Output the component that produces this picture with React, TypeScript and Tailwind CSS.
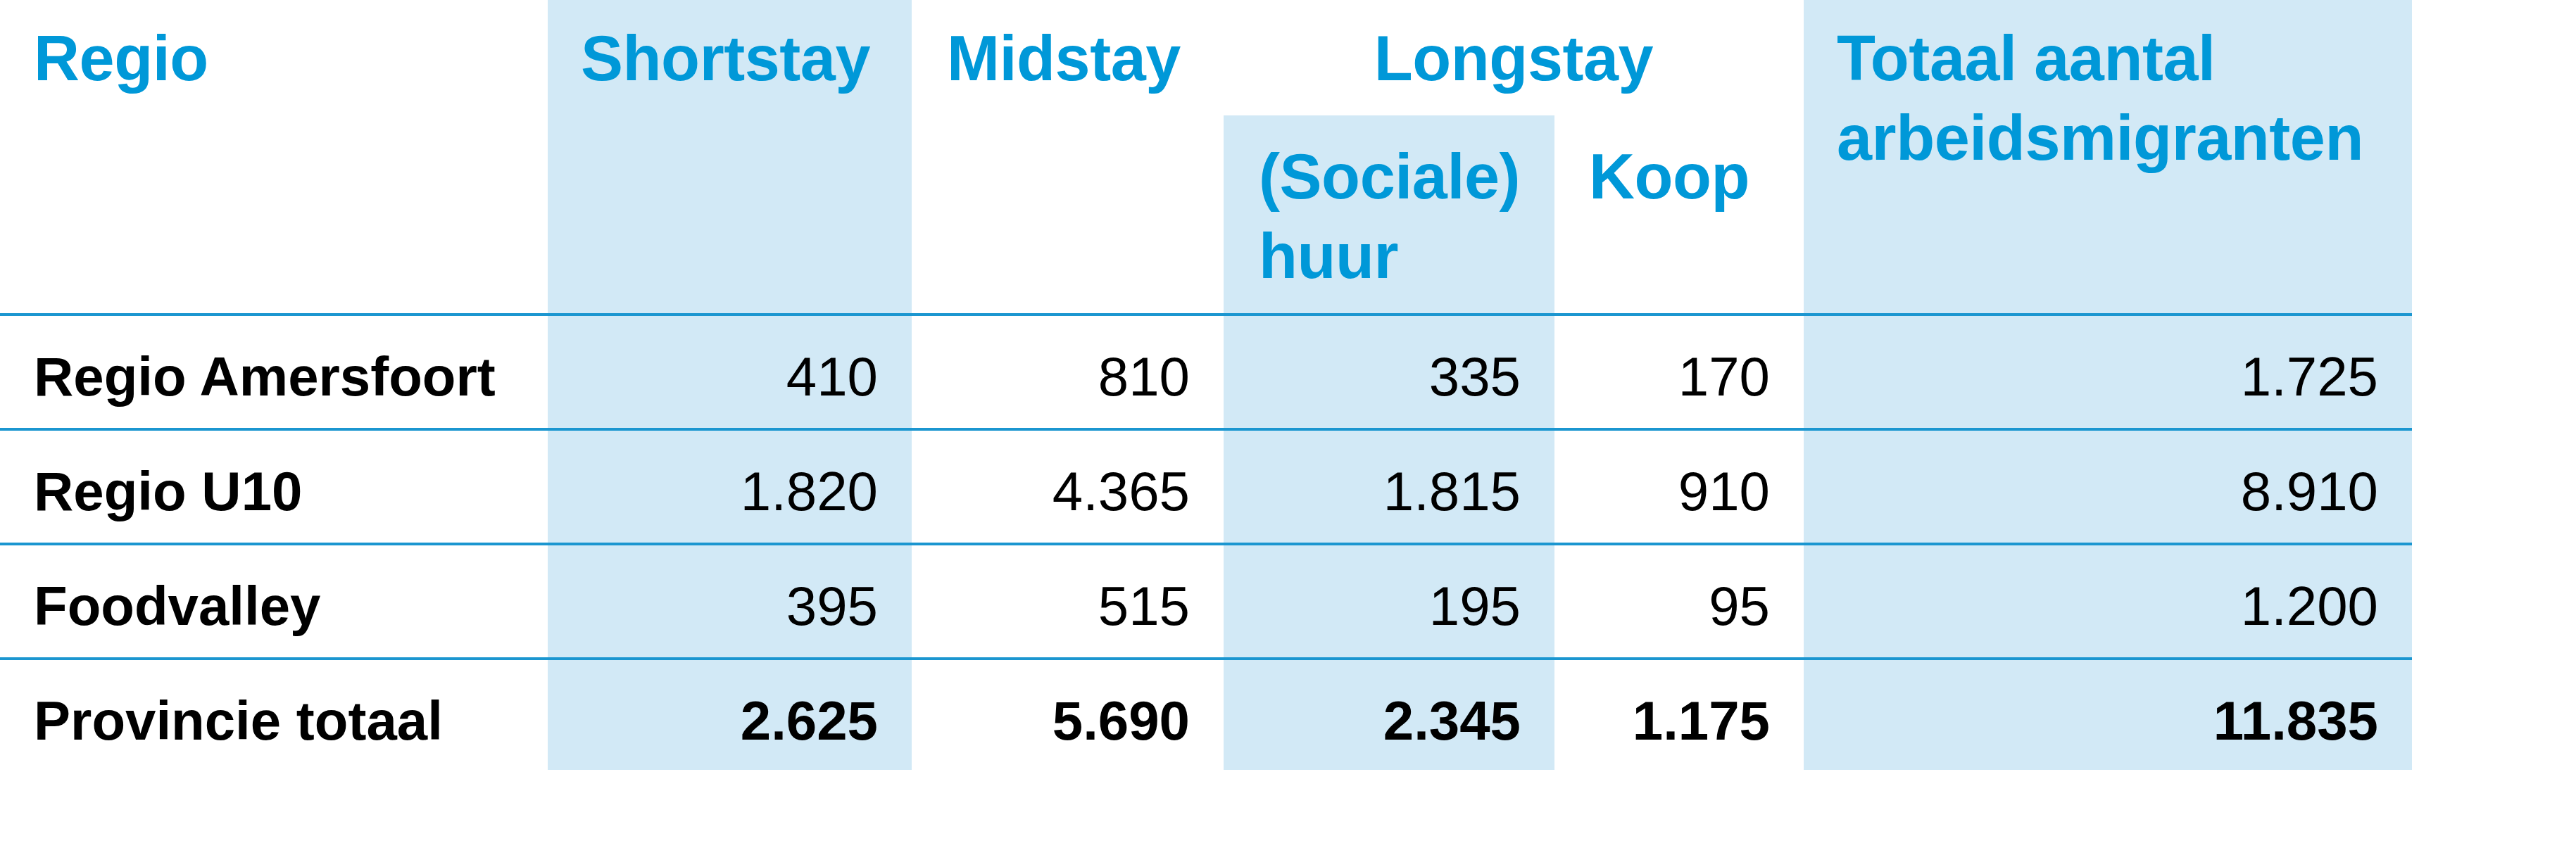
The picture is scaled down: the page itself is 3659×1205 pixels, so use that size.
import { Fragment } from "react";

const rows = [
  { name: "Regio Amersfoort", values: ["410", "810", "335", "170", "1.725"] },
  { name: "Regio U10", values: ["1.820", "4.365", "1.815", "910", "8.910"] },
  { name: "Foodvalley", values: ["395", "515", "195", "95", "1.200"] },
  { name: "Provincie totaal", values: ["2.625", "5.690", "2.345", "1.175", "11.835"], total: true },
];

// shaded columns: Shortstay, (Sociale) huur, Totaal
const shaded = [true, false, true, false, true];

const head = "text-[90px] leading-[113px] font-bold text-[#0098d8] pt-[27px] tracking-[-0.005em]";

export default function App() {
  return (
    <div
      className="w-[3659px] h-[1205px] bg-white"
      style={{ fontFamily: '"Liberation Sans", Arial, sans-serif' }}
    >
      <div className="grid grid-cols-[778px_517px_443px_470px_354px_864px] grid-rows-[164px_281px_163px_163px_163px_160px]">
        {/* Header */}
        <div className={`col-start-1 row-start-1 row-span-2 pl-[48px] ${head}`}>Regio</div>
        <div className={`col-start-2 row-start-1 row-span-2 pl-[47px] bg-[#d2e9f6] ${head}`}>Shortstay</div>
        <div className={`col-start-3 row-start-1 row-span-2 pl-[50px] ${head}`}>Midstay</div>
        <div className={`col-start-4 col-span-2 row-start-1 text-center ${head}`}>Longstay</div>
        <div className="col-start-4 row-start-2 pl-[50px] pt-[31px] bg-[#d2e9f6] text-[90px] leading-[113px] font-bold text-[#0098d8] tracking-[-0.005em]">
          (Sociale)
          <br />
          huur
        </div>
        <div className="col-start-5 row-start-2 pl-[49px] pt-[31px] text-[90px] leading-[113px] font-bold text-[#0098d8] tracking-[-0.005em]">
          Koop
        </div>
        <div className={`col-start-6 row-start-1 row-span-2 pl-[47px] bg-[#d2e9f6] ${head}`}>
          Totaal aantal
          <br />
          arbeidsmigranten
        </div>

        {/* Body */}
        {rows.map((row) => (
          <Fragment key={row.name}>
            <div className="border-t-4 border-[#1b96d0] pl-[48px] pt-[38px] text-[78px] leading-[96px] font-bold text-black whitespace-nowrap">
              {row.name}
            </div>
            {row.values.map((v, i) => (
              <div
                key={i}
                className={`border-t-4 border-[#1b96d0] pr-[48px] pt-[38px] text-right text-[78px] leading-[96px] text-black ${
                  shaded[i] ? "bg-[#d2e9f6]" : ""
                } ${row.total ? "font-bold" : "font-normal"}`}
              >
                {v}
              </div>
            ))}
          </Fragment>
        ))}
      </div>
    </div>
  );
}
